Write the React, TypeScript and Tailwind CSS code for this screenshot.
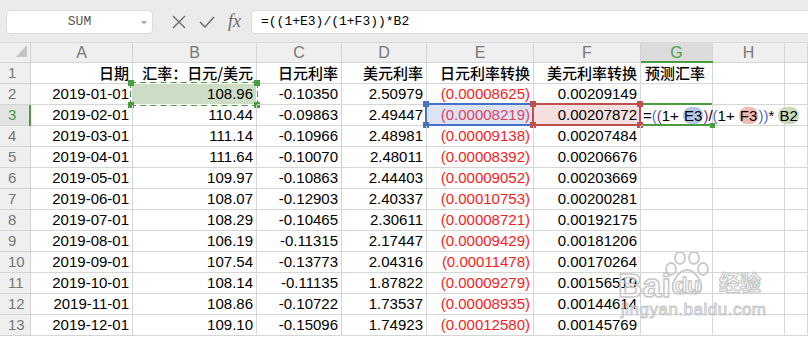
import React from "react";

const letters = ["A", "B", "C", "D", "E", "F", "G", "H", ""];

const data: string[][] = [
  ["2019-01-01", "108.96", "-0.10350", "2.50979", "(0.00008625)", "0.00209149"],
  ["2019-02-01", "110.44", "-0.09863", "2.49447", "(0.00008219)", "0.00207872"],
  ["2019-03-01", "111.14", "-0.10966", "2.48981", "(0.00009138)", "0.00207484"],
  ["2019-04-01", "111.64", "-0.10070", "2.48011", "(0.00008392)", "0.00206676"],
  ["2019-05-01", "109.97", "-0.10863", "2.44403", "(0.00009052)", "0.00203669"],
  ["2019-06-01", "108.07", "-0.12903", "2.40337", "(0.00010753)", "0.00200281"],
  ["2019-07-01", "108.29", "-0.10465", "2.30611", "(0.00008721)", "0.00192175"],
  ["2019-08-01", "106.19", "-0.11315", "2.17447", "(0.00009429)", "0.00181206"],
  ["2019-09-01", "107.54", "-0.13773", "2.04316", "(0.00011478)", "0.00170264"],
  ["2019-10-01", "108.14", "-0.11135", "1.87822", "(0.00009279)", "0.00156519"],
  ["2019-11-01", "108.86", "-0.10722", "1.73537", "(0.00008935)", "0.00144614"],
  ["2019-12-01", "109.10", "-0.15096", "1.74923", "(0.00012580)", "0.00145769"],
];

const headers = ["日期", "汇率：日元/美元", "日元利率", "美元利率", "日元利率转换", "美元利率转换", "预测汇率"];

const gridCols = "grid grid-cols-[31px_102px_124px_85px_85px_107px_107px_72px_72px_23px]";
const font = "font-['Liberation_Sans','Noto_Sans_CJK_SC',sans-serif]";

function Handle({ cls }: { cls: string }) {
  return <span className={`absolute w-[6px] h-[6px] ${cls}`} />;
}

function RowHeader({ n, active }: { n: number; active?: boolean }) {
  return (
    <div
      className={`relative h-[21px] border-r border-b border-[#d4d4d4] pl-[8px] text-[15px] leading-[20px] ${
        active ? "text-[#3e9a3e] bg-[#e3e3e3]" : "text-[#777] bg-[#efefef]"
      }`}
    >
      {active && <span className="absolute right-[-1px] top-0 bottom-[-1px] w-[2px] bg-[#4a9d3e]" />}
      {n}
    </div>
  );
}

function Cell({ children, cls = "", right = true }: { children?: React.ReactNode; cls?: string; right?: boolean }) {
  return (
    <div
      className={`relative h-[21px] border-r border-b border-[#d6d6d6] text-[15px] leading-[20px] whitespace-nowrap ${
        right ? "text-right pr-[3px]" : "text-left pl-[4px]"
      } ${cls}`}
    >
      {children}
    </div>
  );
}

function Corners({ color }: { color: string }) {
  return (
    <>
      <Handle cls={`left-[-4px] top-[-4px] ${color}`} />
      <Handle cls={`right-[-4px] top-[-4px] ${color}`} />
      <Handle cls={`left-[-4px] bottom-[-4px] ${color}`} />
      <Handle cls={`right-[-4px] bottom-[-4px] ${color}`} />
    </>
  );
}

export default function App() {
  return (
    <div className={`relative w-[808px] h-[340px] overflow-hidden bg-white ${font}`}>
      {/* Toolbar */}
      <div className="h-[43px] bg-[#ebebeb] flex items-start pt-[10px] border-b border-[#d9d9d9]">
        <div className="ml-[6px] w-[147px] h-[24px] bg-white rounded-[4px] border border-[#dcdcdc] relative flex items-center justify-center">
          <span className="font-['Liberation_Mono',monospace] text-[13px] text-[#555]">SUM</span>
          <svg className="absolute right-[5px] top-[10px]" width="6" height="4" viewBox="0 0 6 4">
            <path d="M0 0 L6 0 L3 3.5 Z" fill="#aaa" />
          </svg>
        </div>
        <div className="flex items-center h-[24px] ml-[19px] gap-[13px] text-[#6a6a6a]">
          <svg width="14" height="14" viewBox="0 0 14 14">
            <path d="M1 1 L13 13 M13 1 L1 13" stroke="#6a6a6a" strokeWidth="1.4" fill="none" />
          </svg>
          <svg width="16" height="14" viewBox="0 0 16 14">
            <path d="M1 7 L6 12 L15 2" stroke="#6a6a6a" strokeWidth="1.5" fill="none" />
          </svg>
          <span className="font-['Liberation_Serif',serif] italic text-[18px] leading-[18px] text-[#6a6a6a] -mt-[2px]">fx</span>
        </div>
        <div className="ml-[10px] flex-1 h-[24px] bg-white rounded-l-[4px] border border-r-0 border-[#dcdcdc] flex items-center pl-[9px]">
          <span className="font-['Liberation_Mono',monospace] text-[13px] text-black">=((1+E3)/(1+F3))*B2</span>
        </div>
      </div>

      {/* Column headers */}
      <div className={`${gridCols} h-[20px]`}>
        <div className="relative border-r border-b border-[#d4d4d4] bg-[#efefef]">
          <svg className="absolute left-[16px] top-[2px]" width="11" height="12" viewBox="0 0 11 12">
            <path d="M11 0 L11 12 L0 12 Z" fill="#c4c4c4" />
          </svg>
        </div>
        {letters.map((l, i) => (
          <div
            key={i}
            className={`relative border-r border-b border-[#d4d4d4] text-center text-[16px] leading-[19px] ${
              l === "G" ? "bg-[#dcdcdc] text-[#4aa04a]" : "bg-[#efefef] text-[#777]"
            }`}
          >
            {l}
            {l === "G" && <span className="absolute left-0 right-[-1px] bottom-[-1px] h-[2px] bg-[#4a9d3e]" />}
          </div>
        ))}
      </div>

      {/* Row 1 */}
      <div className={gridCols}>
        <RowHeader n={1} />
        {headers.map((h, i) => (
          <Cell key={i} right={i !== 6} cls="text-black font-['Noto_Sans_CJK_SC',sans-serif] font-medium">
            {h}
          </Cell>
        ))}
        <Cell />
        <Cell />
      </div>

      {/* Data rows */}
      {data.map((r, ri) => {
        const n = ri + 2;
        const isRow3 = n === 3;
        const isRow2 = n === 2;
        return (
          <div key={n} className={gridCols}>
            <RowHeader n={n} active={isRow3} />
            <Cell cls="text-black">{r[0]}</Cell>
            <Cell cls={`text-black ${isRow2 ? "bg-[#cddcc5]" : ""}`}>
              {isRow2 && (
                <span className="absolute left-[-3px] right-[-2px] top-[-2px] bottom-[-2px] border-2 border-dashed border-[#4a9d3e] outline outline-1 outline-white -outline-offset-[2px]">
                  <Corners color="bg-[#4a9d3e]" />
                </span>
              )}
              <span className="relative">{r[1]}</span>
            </Cell>
            <Cell cls="text-black">{r[2]}</Cell>
            <Cell cls="text-black">{r[3]}</Cell>
            <Cell cls={`${isRow3 ? "bg-[#dde3f3] text-[#e0405a]" : "text-[#ff1a1a]"}`}>
              {isRow3 && (
                <span className="absolute left-[-2px] right-[-1px] top-[-2px] bottom-[-1px] border-2 border-[#4472c4]">
                  <Corners color="bg-[#4472c4]" />
                </span>
              )}
              <span className="relative">{r[4]}</span>
            </Cell>
            <Cell cls={`text-black ${isRow3 ? "bg-[#f6e0df]" : ""}`}>
              {isRow3 && (
                <span className="absolute left-[-2px] right-[-1px] top-[-2px] bottom-[-1px] border-2 border-[#c0504d]">
                  <Corners color="bg-[#c0504d]" />
                </span>
              )}
              <span className="relative">{r[5]}</span>
            </Cell>
            <Cell right={false} cls={isRow3 ? "overflow-visible z-10" : ""}>
              {isRow3 && (
                <>
                  <span className="absolute left-[2px] right-0 top-[-2px] h-[2px] bg-[#4a9d3e]" />
                  <span className="absolute left-[2px] right-0 bottom-[-1px] h-[2px] bg-[#4a9d3e]" />
                  <span className="absolute right-[-3px] bottom-[-3px] w-[5px] h-[5px] bg-[#4a9d3e]" />
                  <span className="absolute left-[2px] top-0 text-[15px] leading-[21px] text-black whitespace-nowrap">
                    =<span className="text-[#5b6bd0]">(</span>
                    <span className="text-[#7030a0]">(</span>1+{" "}
                    <span className="bg-[#b4c6e7] rounded-[8px] px-[1px]">E3</span>
                    <span className="text-[#7030a0]">)</span>/<span className="text-[#5b6bd0]">(</span>1+{" "}
                    <span className="bg-[#f2b9b3] rounded-[8px] px-[1px]">F3</span>
                    <span className="text-[#5b6bd0]">)</span>
                    <span className="text-[#5b6bd0]">)</span>*{" "}
                    <span className="bg-[#c9dabb] rounded-[8px] px-[1px]">B2</span>
                  </span>
                </>
              )}
            </Cell>
            <Cell cls={isRow3 ? "bg-white" : ""} />
            <Cell />
          </div>
        );
      })}

      {/* Watermark overlay */}
      <div className="absolute left-[618px] top-[252px] w-[160px] h-[72px] pointer-events-none select-none z-20">
        <svg className="absolute left-[45px] top-0" width="48" height="44" viewBox="0 0 48 44">
          <g fill="none" stroke="#c8c8c8" strokeWidth="1.8">
            <ellipse cx="8" cy="17" rx="5" ry="6" />
            <ellipse cx="17" cy="6" rx="5" ry="6" />
            <ellipse cx="31" cy="6" rx="5" ry="6" />
            <ellipse cx="40" cy="17" rx="5" ry="6" />
            <path d="M24 18 C16 18 8 30 10 38 C12 44 20 41 24 41 C28 41 36 44 38 38 C40 30 32 18 24 18 Z" />
          </g>
        </svg>
        <span className="absolute left-0 top-[16px] whitespace-nowrap font-['Liberation_Sans',sans-serif] font-bold text-[34px] leading-[34px] text-transparent [-webkit-text-stroke:1.5px_#c8c8c8]">
          Bai
        </span>
        <span className="absolute left-[57px] top-[22px] whitespace-nowrap font-['Liberation_Sans',sans-serif] font-bold text-[20px] leading-[22px] text-transparent [-webkit-text-stroke:1.3px_#c8c8c8]">
          du
        </span>
        <span className="absolute left-[101px] top-[14px] whitespace-nowrap font-['Noto_Sans_CJK_SC',sans-serif] font-bold text-[21px] leading-[30px] text-transparent [-webkit-text-stroke:1.2px_#c8c8c8]">
          经验
        </span>
        <span className="absolute left-[3px] top-[48px] whitespace-nowrap font-['Liberation_Sans',sans-serif] text-[17px] leading-[20px] text-transparent [-webkit-text-stroke:1px_#c8c8c8] tracking-[0.5px]">
          jingyan.baidu.com
        </span>
      </div>
    </div>
  );
}
